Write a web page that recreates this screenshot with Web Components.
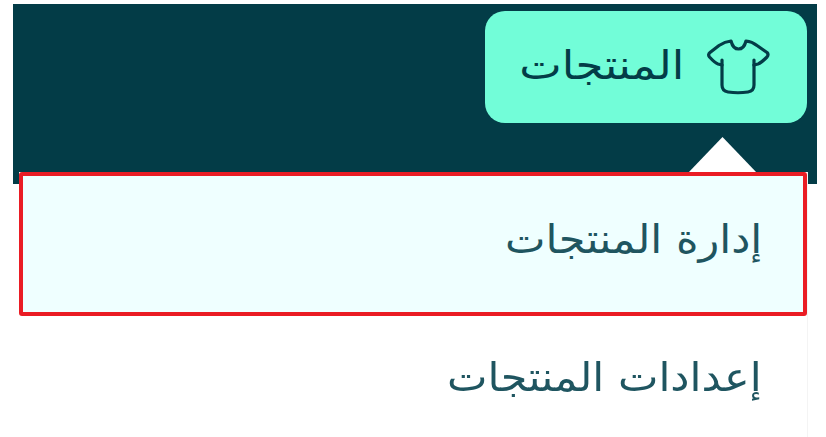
<!DOCTYPE html>
<html lang="ar" dir="rtl"><head><meta charset="utf-8">
<style>
html,body{margin:0;background:#fff;width:826px;height:437px;overflow:hidden}
body{font-family:"DejaVu Sans",sans-serif}
nav-header{filter:blur(.45px)}
</style></head><body>
<nav-header>
  <nav-button slot="button" label="المنتجات"></nav-button>
  <drop-menu slot="menu">
    <menu-item active>إدارة المنتجات</menu-item>
    <menu-item>إعدادات المنتجات</menu-item>
  </drop-menu>
</nav-header>
<script>
class NavHeader extends HTMLElement{constructor(){super();this.attachShadow({mode:'open'}).innerHTML=`<style>
:host{display:block;box-sizing:border-box;width:804px;height:180px;margin:4px 9px 0 13px;background:#033c47;padding:7px 10px 0 0;position:relative}
.row{display:flex;justify-content:flex-start}
.menu{position:absolute;left:6px;right:10px;top:168px}
.tri{position:absolute;top:133px;left:675px;width:69px;height:36px;background:#fff;clip-path:polygon(50% 0,100% 100%,0 100%)}
</style><div class="row"><slot name="button"></slot></div><div class="tri"></div><div class="menu"><slot name="menu"></slot></div>`}}
class NavButton extends HTMLElement{constructor(){super();this.attachShadow({mode:'open'}).innerHTML=`<style>
:host{display:flex;box-sizing:border-box;width:322px;height:112px;background:#72fdd8;border-radius:20px;align-items:center;gap:22px;padding:0 37px 0 0;color:#033c47;font-size:40px}
svg{width:64px;height:58px;flex:none}
span{display:inline-block;line-height:1;margin-top:-4px;transform:scaleX(1.128);transform-origin:100% 50%}
</style><svg viewBox="0 0 64 58" fill="none" stroke="#033c47" stroke-width="3.2" stroke-linecap="round" stroke-linejoin="round"><path d="M16 22 L16 47 Q16 53 22 54 Q32 55.5 42 54 Q48 53 48 47 L48 22"/><path d="M16 27 L12 26 Q9 25 3.5 19 Q1.5 16.5 4 14.5 L13 7.5 Q19 3.5 25 3 Q27 11 32.5 11 Q38 11 40 3 Q46 3.5 51 7.5 L61 14.5 Q63 16.5 61 19 Q55 25 52 26 L48 27"/></svg><span></span>`;
this.shadowRoot.querySelector('span').textContent=this.getAttribute('label')}}
class DropMenu extends HTMLElement{constructor(){super();this.attachShadow({mode:'open'}).innerHTML=`<style>
:host{display:block;background:#fff;box-shadow:1px 0 0 #f4f4f4}
</style><slot></slot>`}}
class MenuItem extends HTMLElement{constructor(){super();this.attachShadow({mode:'open'}).innerHTML=`<style>
:host{display:flex;box-sizing:border-box;height:130px;align-items:center;padding:0 45px 8px 0;font-size:40px;color:#1f5560;background:#fff}
:host([active]){height:144px;background:#efffff;border:4px solid #ea1c24;border-radius:3px;padding:0 41px 10px 0}
.t{display:inline-block;transform:scaleX(1.075);transform-origin:100% 50%}
</style><div class="t"><slot></slot></div>`}}
customElements.define('nav-header',NavHeader);
customElements.define('nav-button',NavButton);
customElements.define('drop-menu',DropMenu);
customElements.define('menu-item',MenuItem);
</script></body></html>
